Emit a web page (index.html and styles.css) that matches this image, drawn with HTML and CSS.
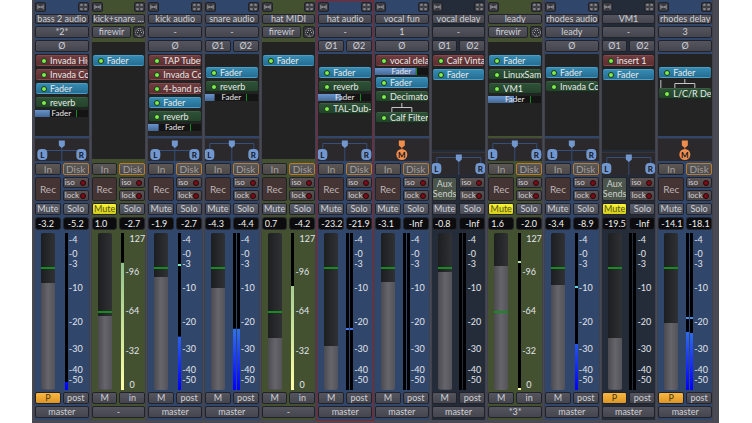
FILE: index.html
```
<!DOCTYPE html>
<html lang="en">
<head>
  <meta charset="UTF-8">
  <meta name="viewport" content="width=device-width, initial-scale=1">
  <title>Mixer</title>
  <link rel="stylesheet" href="styles.css">
</head>
<body>
  <main class="mixer" id="mixer"></main>
  <script src="mixer.js"></script>
</body>
</html>
```
FILE: styles.css
```
* {
  box-sizing: border-box;
}
body {
  margin: 0;
  padding: 0 33px 0 32px;
  background: #fff;
  font-family: Lato, 'Open Sans', sans-serif;
  font-size: 9px;
  line-height: 10px;
  color: #d0d0d6;
}
button, input {
  font: inherit;
  color: inherit;
  margin: 0;
  padding: 0;
}
.mixer {
  display: grid;
  grid-template-columns: repeat(12, minmax(0, 1fr));
  gap: 1px;
  min-height: 100vh;
  padding: 0 6px 3px 2px;
  background: #484952;
}

/* strips */
.strip {
  display: flex;
  flex-direction: column;
  gap: 2px;
  padding: 2px 1px;
  background: #30466a;
  box-shadow: inset 1px 0 #3f424c, inset -1px 0 #3f424c;
}
.strip.midi {
  background: #445130;
}
.strip.bus {
  background: #242c39;
}
.strip.selected {
  position: relative;
  box-shadow: 0 0 0 1px #8f2225, inset 0 1px #8f2225;
}
.row {
  display: grid;
  grid-template-columns: 1fr 1fr;
  gap: 2px;
}
.row.single {
  grid-template-columns: minmax(0, 1fr);
}
.row.with-midi {
  grid-template-columns: 1fr 12px;
}
.header {
  display: flex;
  justify-content: space-between;
}
.btn {
  height: 12px;
  border: 1px solid #22232a;
  border-radius: 2px;
  background: linear-gradient(#54555e, #44454d);
  text-align: center;
  white-space: nowrap;
  overflow: hidden;
}
.btn.icon {
  width: 11px;
  height: 10px;
  line-height: 0;
  background: #3a3b41;
}
.icon svg, .midi-in svg {
  width: 9px;
  height: 9px;
  fill: none;
  stroke: #a2a2a8;
}
.header svg {
  height: 8px;
}
.btn.name {
  height: 10px;
  line-height: 8px;
}
.btn.midi-in {
  line-height: 0;
  background: #34353a;
}

/* processor list */
.processors {
  flex: 1 0 80px;
  display: flex;
  flex-direction: column;
  gap: 3px;
  padding: 1px;
  overflow: hidden;
  background: #232323;
  border-radius: 1px;
}
.strip.midi .processors {
  margin-top: 2px;
}
.strip.no-pan .processors {
  margin-bottom: 2px;
}
.processor {
  display: flex;
  align-items: center;
  gap: 3px;
  flex: none;
  height: 11px;
  padding: 0 0 0 5px;
  border: 1px solid #3b5f42;
  border-width: 1px 0;
  border-bottom-color: #182a1c;
  border-radius: 2px;
  background: linear-gradient(#2c5136, #25422c);
  color: #e6eae6;
  line-height: 9px;
  white-space: nowrap;
  overflow: hidden;
}
.processor.pre {
  background: linear-gradient(#713b3e, #5c2f32);
  border-color: #84494c #391b1d;
}
.processor.main {
  background: linear-gradient(#348bb4, #286c91);
  border-color: #4b9fc6 #194a66;
}
.led {
  flex: none;
  width: 6px;
  height: 6px;
  border: 1px solid #17351a;
  border-radius: 50%;
  background: #80ee4c;
}
.blank {
  flex: none;
  height: 9px;
}
.wires {
  flex: none;
  height: 10px;
  margin: -3px 0;
  fill: none;
  stroke: #c5c5c5;
}
.send {
  display: grid;
  flex: none;
  height: 7px;
  margin: -1px 0 -1px -1px;
  background:
    linear-gradient(#168a22 0 0) 80% 0 / 1px 100% no-repeat,
    linear-gradient(#6894cc, #446894) 0 0 / var(--level) 100% no-repeat,
    #141414;
  color: #e8e8ec;
  font-size: 8px;
  line-height: 7px;
  text-align: center;
}
.send span, .send input {
  grid-area: 1 / 1;
}
.send input {
  width: 100%;
  height: 7px;
  opacity: 0;
}

/* panner */
.panner {
  height: 23px;
  background: #2b292b;
  border-top: 1px solid #38353a;
}
.panner svg {
  display: block;
  width: 100%;
  height: 22px;
}
.pan-line {
  fill: none;
  stroke: #344f7c;
}
.pan-knob {
  fill: #7197ce;
}
.pan-text {
  fill: #10151f;
  font-size: 8px;
  font-weight: 700;
  text-anchor: middle;
}
.mono .pan-line {
  stroke: #a75a26;
}
.mono .pan-knob {
  fill: #f08c4c;
}

/* record, solo and mute */
.btn.monitor {
  background: linear-gradient(#5b5856, #4b4847);
  color: #a6a09e;
  font-size: 10px;
}
.btn.disk {
  border-color: #bb7b2b;
}
.btn.rec, .btn.aux {
  height: 24px;
  background: #443434;
  color: #bdb4b4;
  font-size: 10px;
}
.btn.aux {
  background: #4b554b;
  color: #ccd2cc;
  font-size: 9px;
}
.locks {
  display: flex;
  flex-direction: column;
  justify-content: space-between;
}
.btn.lock {
  display: flex;
  justify-content: space-between;
  align-items: center;
  height: 11px;
  padding: 0 2px 0 1px;
  background: linear-gradient(#5b5353, #4a4343);
  font-size: 8px;
  line-height: 9px;
}
.lock .led {
  border-color: #250a0d;
  background: #7d0b18;
}
.btn.mute, .btn.solo {
  background: linear-gradient(#5c606a, #484b55);
}
.btn.mute.on {
  background: linear-gradient(#fbf535, #d5cd18);
  color: #55541c;
}
.value {
  width: 100%;
  height: 13px;
  border: 1px solid #25262c;
  border-radius: 3px;
  background: #0c0c0e;
  color: #f0f0f0;
  padding-left: 2px;
}
.value.peak {
  padding: 0;
  text-align: center;
}

/* fader and meter */
.levels {
  height: 158px;
  padding-top: 1px;
}
.fader {
  appearance: none;
  writing-mode: vertical-lr;
  direction: rtl;
  justify-self: center;
  width: 14px;
  height: 157px;
  --unity: 22%;
  border-radius: 2px;
  background:
    linear-gradient(#188a22 0 0) 0 var(--unity) / 100% 2px no-repeat,
    linear-gradient(90deg, #4b4a50, #66656c 50%, #545359) 0 100% / 100% var(--level) no-repeat,
    linear-gradient(90deg, #1d1e20, #303134);
}
.midi .fader {
  --unity: 50%;
}
.fader::-webkit-slider-runnable-track {
  background: transparent;
}
.fader::-webkit-slider-thumb {
  appearance: none;
  width: 14px;
  height: 4px;
  background: transparent;
}
.meters {
  display: flex;
  gap: 1px;
  padding-left: 2px;
}
.meters.stereo {
  padding-left: 0;
}
.meter {
  flex: none;
  width: 3px;
  background:
    linear-gradient(var(--peak-color, #58d8e0) 0 0) 0 calc(100% - var(--peak)) / 100% 2px no-repeat,
    linear-gradient(#000 0 0) 0 0 / 100% calc(100% - var(--level)) no-repeat,
    linear-gradient(to top, #0000ff, #0d1cff 10%, #3070e8 38%);
}
.midi .meter {
  --peak-color: #b6e4ac;
  background:
    linear-gradient(var(--peak-color) 0 0) 0 calc(100% - var(--peak)) / 100% 2px no-repeat,
    linear-gradient(#000 0 0) 0 0 / 100% calc(100% - var(--level)) no-repeat,
    linear-gradient(to top, #ffffa4, #8cc08c 85%);
}
.scale {
  display: flex;
  flex-direction: column;
  color: #e0e4ec;
  line-height: 0;
  white-space: nowrap;
}
.scale span {
  display: flex;
  align-items: flex-end;
  flex-basis: 0;
}
.midi .scale .plain {
  padding-left: 4px;
}
.btn.point.on {
  background: linear-gradient(#f9b741, #dd9626);
  color: #4b3510;
}
```
FILE: mixer.js
```
// processors: "pre" sits before the fader, "post" after it, a number is a send level
const strips = [
  { name: 'bass 2 audio', input: '*2*', phase: 1, pan: 'narrow', gain: '-3.2', peak: '-5.2', fader: 68, meters: [[5]], point: 'P', out: 'master',
    procs: ['pre:Invada High', 'pre:Invada Comp', 'main:Fader', 'post:reverb', 28] },
  { name: 'kick+snare ...', input: 'firewir', type: 'midi', phase: 0, muted: true, gain: '1.0', peak: '-2.7', fader: 47, meters: [[81]], out: '-',
    procs: ['blank', 'main:Fader'] },
  { name: 'kick audio', input: '-', phase: 1, pan: 'narrow', gain: '-1.9', peak: '-2.7', fader: 72, meters: [[34, 80, '#70f0b8']], out: 'master',
    procs: ['pre:TAP Tubewarmth', 'pre:Invada Comp', 'pre:4-band parametric', 'main:Fader', 'post:reverb', 20] },
  { name: 'snare audio', input: '-', phase: 2, pan: 'wide', gain: '-4.3', peak: '-4.4', fader: 65, meters: [[39], [39]], out: 'master',
    procs: ['blank', 'main:Fader', 'post:reverb', 18] },
  { name: 'hat MIDI', input: 'firewir', type: 'midi', phase: 0, gain: '0.7', peak: '-4.2', fader: 33, meters: [[66]], out: '-',
    procs: ['blank', 'main:Fader'] },
  { name: 'hat audio', input: '-', phase: 2, pan: 'wide', selected: true, gain: '-23.2', peak: '-21.9', fader: 28, meters: [[0, 39, '#3f78f0'], [0, 39, '#3f78f0']], out: 'master',
    procs: ['blank', 'main:Fader', 'post:reverb', 44, 'post:TAL-Dub-3'] },
  { name: 'vocal fun', input: '1', phase: 1, pan: 'mono', gain: '-3.1', peak: '-Inf', fader: 69, meters: [[0], [0]], out: 'master',
    procs: ['pre:vocal delay', 77, 'main:Fader', 'post:Decimator', 'split', 'post:Calf Filter'] },
  { name: 'vocal delay', input: '-', type: 'bus', phase: 2, pan: 'wide', gain: '-0.8', peak: '-Inf', fader: 75, meters: [[0], [0]], out: 'master',
    procs: ['pre:Calf Vintage', 'main:Fader'] },
  { name: 'leady', input: 'firewir', type: 'midi', phase: 0, pan: 'wide', muted: true, gain: '1.6', peak: '-2.0', fader: 79, meters: [[1, 82]], out: '*3*',
    procs: ['blank', 'main:Fader', 'post:LinuxSampler', 'post:VM1', 49] },
  { name: 'rhodes audio', input: 'leady', phase: 1, pan: 'narrow', gain: '-3.4', peak: '-8.9', fader: 67, meters: [[29, 66]], out: 'master',
    procs: ['blank', 'main:Fader', 'post:Invada Comp'] },
  { name: 'VM1', input: '-', type: 'bus', phase: 2, pan: 'wide', muted: true, gain: '-19.5', peak: '-Inf', fader: 33, meters: [[0], [0]], point: 'P', out: 'master',
    procs: ['pre:insert 1', 'main:Fader'] },
  { name: 'rhodes delay', input: '3', phase: 1, pan: 'mono', gain: '-14.1', peak: '-18.1', fader: 43, meters: [[37, 46, '#3f8ff0'], [36, 46, '#3f8ff0']], point: 'P', out: 'master',
    procs: ['blank', 'main:Fader', 'split-side', 'post:L/C/R Delay'] }
];

// label and its distance from the one above
const audioScale = [['-4', 7], ['-0', 14], ['-3', 10], ['-10', 24], ['-20', 34], ['-30', 27], ['-40', 21], ['-50', 10], ['', 10]];
const midiScale = [['127', 6], ['-96', 33], ['-64', 39], ['-32', 40], ['0', 34], ['', 5]];

const narrowIcon = '<svg viewBox="0 0 9 9" aria-hidden="true"><path d="M1.5 2v5M7.5 2v5M2 4.5h5M3 3.5v2M6 3.5v2"/></svg>';
const closeIcon = '<svg viewBox="0 0 9 9" aria-hidden="true"><path d="M1.5 3.5v-2h2M5.5 1.5h2v2M7.5 5.5v2h-2M3.5 7.5h-2v-2M2 2l1.5 1.5M7 2L5.5 3.5M2 7l1.5-1.5M7 7L5.5 5.5"/></svg>';
const midiIcon = '<svg viewBox="0 0 9 9" aria-hidden="true"><circle cx="4.5" cy="4.5" r="4" stroke-dasharray="1.5 .8"/><path d="M2 4.5h1M3 2.5h1M5 2.5h1M6 4.5h1M4 7h1"/></svg>';

function processor(p) {
  if (typeof p === 'number') {
    return `<label class="send" style="--level:${p}%"><span>Fader</span><input type="range" value="${p}"></label>`;
  }
  if (p === 'blank') return '<div class="blank"></div>';
  if (p.startsWith('split')) {
    const side = p === 'split-side' ? 'M1.5 2v8' : '';
    return `<svg class="wires" viewBox="0 0 51 10" aria-hidden="true"><path d="M25.5 1v4M15.5 10V5.5h20V10${side}"/></svg>`;
  }
  const [kind, name] = p.split(':');
  return `<div class="processor ${kind}"><i class="led"></i>${name}</div>`;
}

function panner(kind) {
  const knob = '<path class="pan-knob" d="M23.5 1.5h6v5l-3 2.5-3-2.5z"/>';
  if (kind === 'mono') {
    return `<div class="panner mono"><svg viewBox="0 0 53 22"><path class="pan-line" d="M26.5 8v4"/>${knob}
      <circle class="pan-knob" cx="26.5" cy="15.5" r="5.5"/><text class="pan-text" x="26.5" y="18.5">M</text></svg></div>`;
  }
  const left = kind === 'narrow' ? 7 : 4;
  const right = kind === 'narrow' ? 46 : 48;
  const line = kind === 'narrow' ? 'M7 11.5h39M26.5 8v14' : 'M4.5 11V4.5h44V11M26.5 8v14';
  const badge = (x, t) => `<rect class="pan-knob" x="${x - 5}" y="10" width="10" height="11" rx="4"/><text class="pan-text" x="${x}" y="18.5">${t}</text>`;
  return `<div class="panner"><svg viewBox="0 0 53 22"><path class="pan-line" d="${line}"/>${knob}${badge(left, 'L')}${badge(right, 'R')}</svg></div>`;
}

function phaseRow(count) {
  if (count === 0) return '';
  if (count === 1) return '<div class="row single"><button class="btn">Ø</button></div>';
  return '<div class="row"><button class="btn">Ø1</button><button class="btn">Ø2</button></div>';
}

function scale(rows) {
  return rows.map(([text, gap]) =>
    `<span class="${text.startsWith('-') ? '' : 'plain'}" style="flex-grow:${gap}">${text}</span>`).join('');
}

function meter([level, peak = -10, color]) {
  const tint = color ? `;--peak-color:${color}` : '';
  return `<div class="meter" role="meter" aria-valuenow="${level}" style="--level:${level}%;--peak:${peak}%${tint}"></div>`;
}

function strip(s) {
  const midi = s.type === 'midi';
  const bus = s.type === 'bus';
  const classes = ['strip', s.type || '', s.selected ? 'selected' : '', s.pan ? '' : 'no-pan'].join(' ');
  return `<section class="${classes}">
    <div class="header">
      <button class="btn icon" aria-label="Narrow strip">${narrowIcon}</button>
      <button class="btn icon" aria-label="Hide strip">${closeIcon}</button>
    </div>
    <div class="row single"><button class="btn name">${s.name}</button></div>
    <div class="row ${midi ? 'with-midi' : 'single'}">
      <button class="btn">${s.input}</button>
      ${midi ? `<button class="btn midi-in" aria-label="MIDI input">${midiIcon}</button>` : ''}
    </div>
    ${phaseRow(s.phase)}
    <div class="processors">${s.procs.map(processor).join('')}</div>
    ${s.pan ? panner(s.pan) : ''}
    ${bus ? '' : '<div class="row"><button class="btn monitor">In</button><button class="btn monitor disk">Disk</button></div>'}
    <div class="row">
      ${bus ? '<button class="btn aux">Aux<br>Sends</button>' : '<button class="btn rec">Rec</button>'}
      <div class="locks">
        <button class="btn lock">iso<i class="led"></i></button>
        <button class="btn lock">lock<i class="led"></i></button>
      </div>
    </div>
    <div class="row"><button class="btn mute ${s.muted ? 'on' : ''}">Mute</button><button class="btn solo">Solo</button></div>
    <div class="row">
      <input class="value" type="text" aria-label="${s.name} gain" value="${s.gain}">
      <input class="value peak" type="text" aria-label="${s.name} peak" value="${s.peak}" readonly>
    </div>
    <div class="row levels">
      <input class="fader" type="range" aria-label="${s.name} fader" value="${s.fader}" style="--level:${s.fader}%">
      <div class="meters ${s.meters.length > 1 ? 'stereo' : ''}">
        ${s.meters.map(meter).join('')}
        <div class="scale">${scale(midi ? midiScale : audioScale)}</div>
      </div>
    </div>
    <div class="row">
      <button class="btn point ${s.point ? 'on' : ''}">${s.point || 'M'}</button>
      <button class="btn">${midi ? 'in' : 'post'}</button>
    </div>
    <div class="row single"><button class="btn">${s.out}</button></div>
  </section>`;
}

document.getElementById('mixer').innerHTML = strips.map(strip).join('');
```
